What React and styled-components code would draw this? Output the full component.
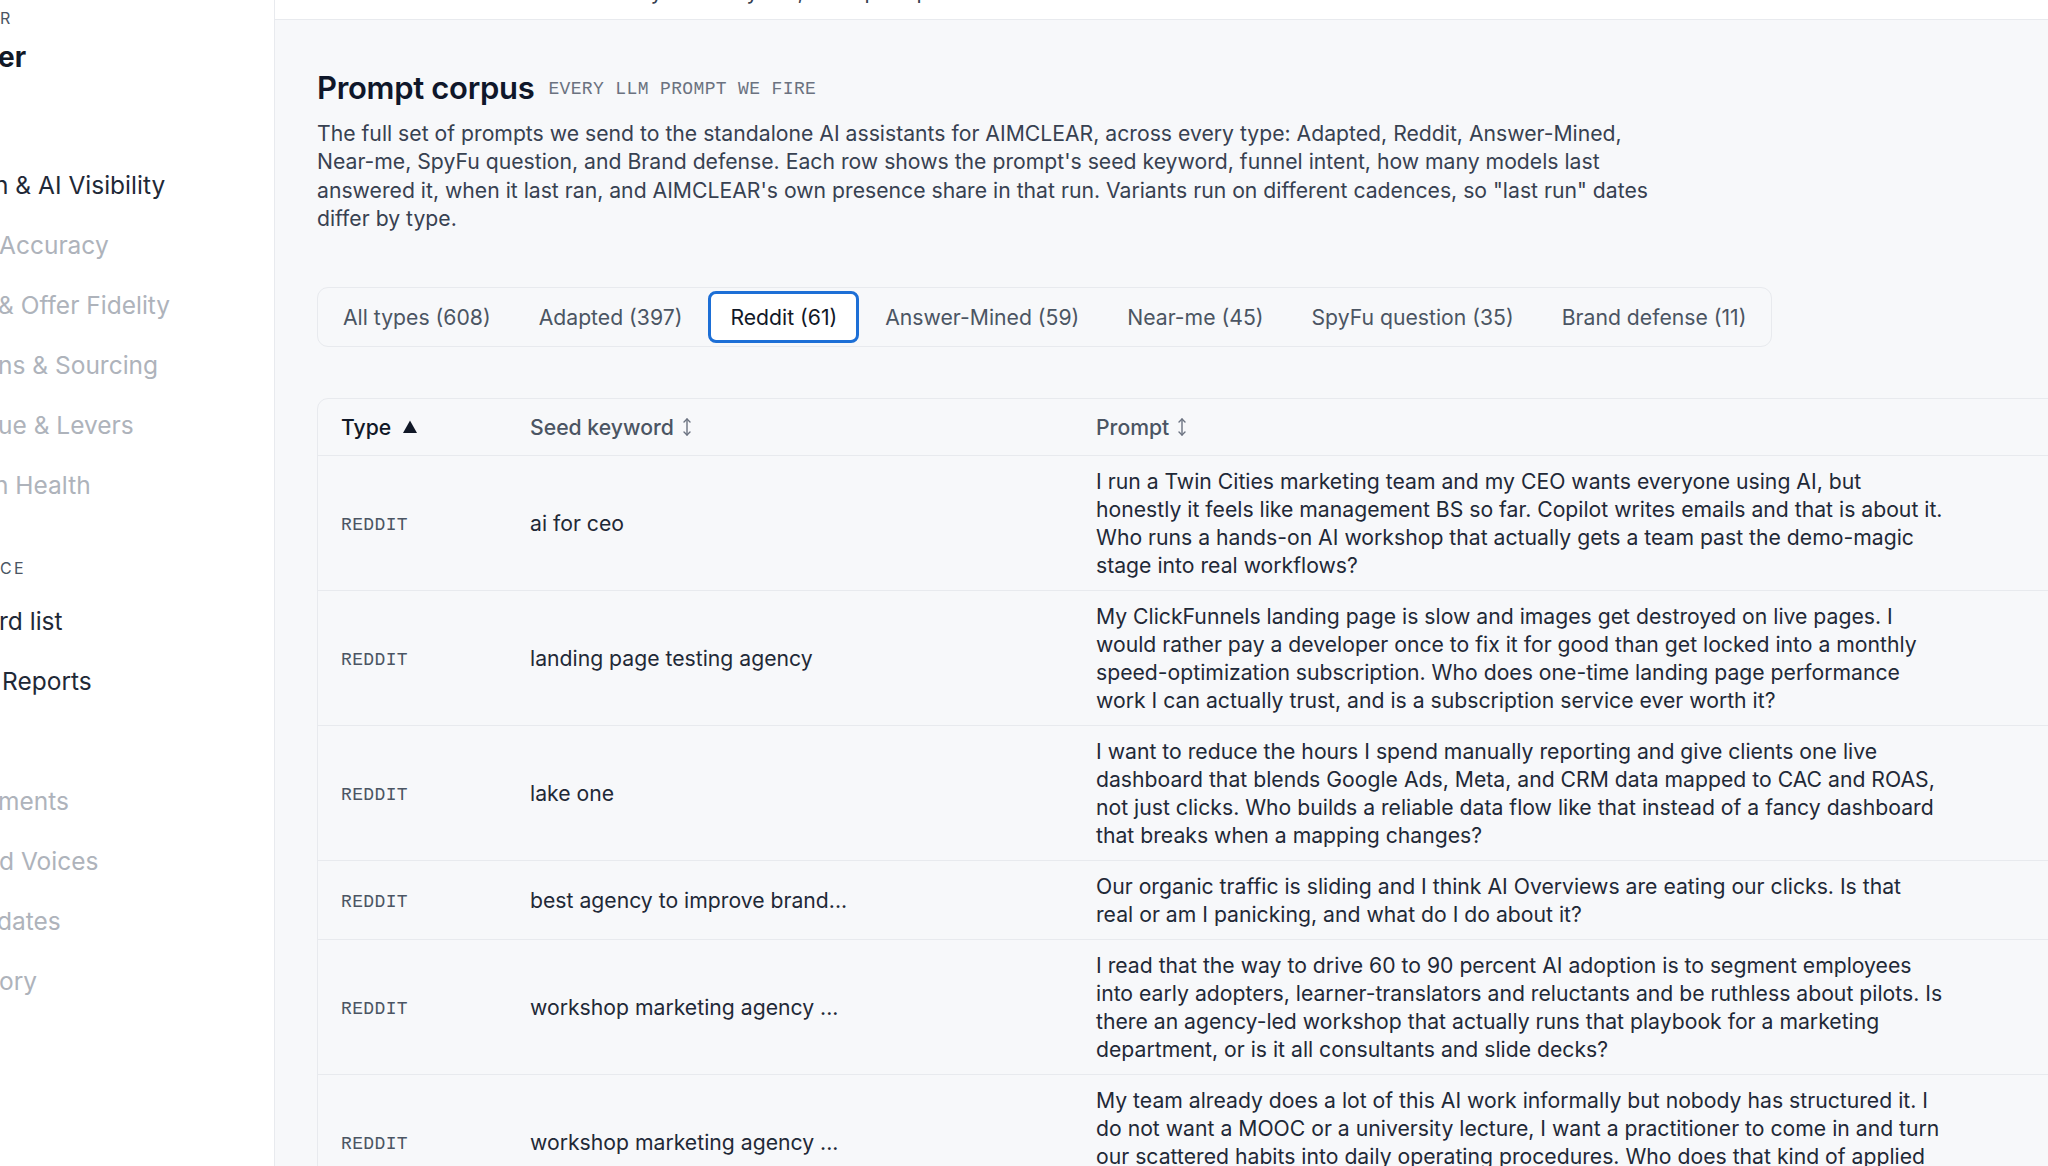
import styled, { createGlobalStyle } from "styled-components";

const GlobalStyle = createGlobalStyle`
  html, body {
    margin: 0;
    padding: 0;
    height: 1166px;
    overflow: hidden;
    background: #f7f8fa;
    font-family: Inter, "Noto Sans", sans-serif;
    color: #1f2937;
  }
  * { box-sizing: border-box; }
`

const Shell = styled.div`
  display: flex;
  width: 2048px;
  height: 1166px;
  overflow: hidden;
`
const Sidebar = styled.aside`
  flex: 0 0 275px;
  background: #ffffff;
  border-right: 1px solid #e8eaee;
  overflow: hidden;
  white-space: nowrap;
`
const Eyebrow = styled.div`
  margin-top: 8px;
  height: 20px;
  line-height: 20px;
  font-size: 16px;
  letter-spacing: 0.12em;
  color: #4b5563;
`
const BrandTitle = styled.div`
  margin-top: 11px;
  height: 36px;
  line-height: 36px;
  font-size: 28px;
  font-weight: 700;
  color: #111827;
  margin-bottom: 80px;
`
const NavItem = styled.div`
  height: 60px;
  display: flex;
  align-items: center;
  font-size: 24.5px;
  color: ${p => (p.$active ? "#1f2937" : "#aeb3bb")};
  margin-left: ${p => p.$shift || 0}px;
`
const SectionLabel = styled.div`
  padding-top: 42px;
  padding-bottom: 12px;
  line-height: 22px;
  font-size: 16px;
  letter-spacing: 0.14em;
  color: #4b5563;
`
const NavSpacer = styled.div`
  height: 60px;
`

const Main = styled.main`
  flex: 1;
  min-width: 0;
  overflow: hidden;
`
const TopBar = styled.header`
  height: 20px;
  background: #ffffff;
  border-bottom: 1px solid #e8eaee;
  overflow: hidden;
  padding-left: 232px;
`
const TopText = styled.div`
  margin-top: -23px;
  line-height: 28px;
  font-size: 21.2px;
  color: #374151;
  white-space: nowrap;
`
const Content = styled.div`
  padding: 48px 0 0 42px;
`
const TitleRow = styled.div`
  display: flex;
  align-items: center;
  gap: 14px;
  height: 40px;
`
const Title = styled.h1`
  margin: 0;
  font-size: 31px;
  line-height: 40px;
  font-weight: 600;
  letter-spacing: -0.01em;
  color: #0f172a;
`
const Kicker = styled.span`
  font-family: "Liberation Mono", "DejaVu Sans Mono", monospace;
  font-size: 18px;
  letter-spacing: 0.02em;
  color: #6b7280;
  padding-top: 1px;
`
const Lead = styled.p`
  margin: 11px 0 0 0;
  max-width: 1337px;
  font-size: 21.2px;
  line-height: 28.4px;
  color: #374151;
`
const TabBar = styled.div`
  display: inline-flex;
  gap: 4px;
  margin-top: 54px;
  padding: 3px;
  border: 1px solid #e8eaee;
  border-radius: 11px;
  background: #f7f8fa;
`
const Tab = styled.button`
  height: 52px;
  padding: 0 19px;
  border-radius: 8px;
  border: 3px solid ${p => (p.$active ? "#1d6fd6" : "transparent")};
  background: ${p => (p.$active ? "#ffffff" : "transparent")};
  font-family: Inter, sans-serif;
  font-size: 21.2px;
  color: ${p => (p.$active ? "#111827" : "#4b5563")};
  cursor: pointer;
`
const TableCard = styled.div`
  margin-top: 51px;
  width: 2400px;
  border: 1px solid #e8eaee;
  border-radius: 11px;
  overflow: hidden;
`
const Table = styled.table`
  border-collapse: collapse;
  table-layout: fixed;
  width: 100%;
`
const Th = styled.th`
  height: 57px;
  padding: 0 23px;
  text-align: left;
  font-weight: 500;
  font-size: 21.2px;
  color: ${p => (p.$sorted ? "#111827" : "#4b5563")};
  border-bottom: 1px solid #e8eaee;
  white-space: nowrap;
`
const HeadInner = styled.span`
  display: inline-flex;
  align-items: center;
  gap: ${p => (p.$sorted ? 11 : 8)}px;
`
const Tr = styled.tr`
  & + & td { border-top: 1px solid #e8eaee; }
`
const Td = styled.td`
  padding: 11px 23px;
  vertical-align: middle;
  font-size: 21.2px;
  line-height: 28px;
  color: #1f2937;
`
const TypeTag = styled.span`
  font-family: "Liberation Mono", "DejaVu Sans Mono", monospace;
  font-size: 18px;
  letter-spacing: 0.02em;
  color: #4b5563;
`
const PromptText = styled.div`
  max-width: 847px;
`

function SortUp() {
  return (
    <svg width="16" height="16" viewBox="0 0 16 16">
      <path d="M8 1.5 L15 14 H1 Z" fill="#111827" />
    </svg>
  );
}

function SortBoth() {
  return (
    <svg width="10" height="20" viewBox="0 0 10 20" fill="none" stroke="#6b7280" strokeWidth="1.4" strokeLinecap="round" strokeLinejoin="round">
      <path d="M5 2 V18" />
      <path d="M2 5 L5 2 L8 5" />
      <path d="M2 15 L5 18 L8 15" />
    </svg>
  );
}

const tabs = [
  { label: "All types (608)" },
  { label: "Adapted (397)" },
  { label: "Reddit (61)", active: true },
  { label: "Answer-Mined (59)" },
  { label: "Near-me (45)" },
  { label: "SpyFu question (35)" },
  { label: "Brand defense (11)" },
];

const rows = [
  {
    seed: "ai for ceo",
    prompt: "I run a Twin Cities marketing team and my CEO wants everyone using AI, but honestly it feels like management BS so far. Copilot writes emails and that is about it. Who runs a hands-on AI workshop that actually gets a team past the demo-magic stage into real workflows?",
  },
  {
    seed: "landing page testing agency",
    prompt: "My ClickFunnels landing page is slow and images get destroyed on live pages. I would rather pay a developer once to fix it for good than get locked into a monthly speed-optimization subscription. Who does one-time landing page performance work I can actually trust, and is a subscription service ever worth it?",
  },
  {
    seed: "lake one",
    prompt: "I want to reduce the hours I spend manually reporting and give clients one live dashboard that blends Google Ads, Meta, and CRM data mapped to CAC and ROAS, not just clicks. Who builds a reliable data flow like that instead of a fancy dashboard that breaks when a mapping changes?",
  },
  {
    seed: "best agency to improve brand...",
    prompt: "Our organic traffic is sliding and I think AI Overviews are eating our clicks. Is that real or am I panicking, and what do I do about it?",
  },
  {
    seed: "workshop marketing agency ...",
    prompt: "I read that the way to drive 60 to 90 percent AI adoption is to segment employees into early adopters, learner-translators and reluctants and be ruthless about pilots. Is there an agency-led workshop that actually runs that playbook for a marketing department, or is it all consultants and slide decks?",
  },
  {
    seed: "workshop marketing agency ...",
    prompt: "My team already does a lot of this AI work informally but nobody has structured it. I do not want a MOOC or a university lecture, I want a practitioner to come in and turn our scattered habits into daily operating procedures. Who does that kind of applied enablement for an in-house marketing team?",
  },
];

export default function App() {
  return (
    <>
      <GlobalStyle />
      <Shell>
        <Sidebar>
          <Eyebrow>R</Eyebrow>
          <BrandTitle style={{ marginLeft: -2 }}>er</BrandTitle>
          <NavItem $active $shift={-6}>n &amp; AI Visibility</NavItem>
          <NavItem $shift={-1}>Accuracy</NavItem>
          <NavItem $shift={-2}>&amp; Offer Fidelity</NavItem>
          <NavItem $shift={-2}>ns &amp; Sourcing</NavItem>
          <NavItem $shift={-2}>ue &amp; Levers</NavItem>
          <NavItem $shift={-6}>n Health</NavItem>
          <SectionLabel>CE</SectionLabel>
          <NavItem $active $shift={-1}>rd list</NavItem>
          <NavItem $active $shift={2}>Reports</NavItem>
          <NavSpacer />
          <NavItem $shift={-2}>ments</NavItem>
          <NavItem $shift={-1}>d Voices</NavItem>
          <NavItem $shift={-3}>dates</NavItem>
          <NavItem $shift={-1}>ory</NavItem>
        </Sidebar>
        <Main>
          <TopBar>
            <TopText>Refreshed daily for every run, each prompt</TopText>
          </TopBar>
          <Content>
            <TitleRow>
              <Title>Prompt corpus</Title>
              <Kicker>EVERY LLM PROMPT WE FIRE</Kicker>
            </TitleRow>
            <Lead>
              The full set of prompts we send to the standalone AI assistants for AIMCLEAR, across every type: Adapted, Reddit, Answer-Mined, Near-me, SpyFu question, and Brand defense. Each row shows the prompt's seed keyword, funnel intent, how many models last answered it, when it last ran, and AIMCLEAR's own presence share in that run. Variants run on different cadences, so "last run" dates differ by type.
            </Lead>
            <TabBar>
              {tabs.map(t => (
                <Tab key={t.label} $active={t.active}>{t.label}</Tab>
              ))}
            </TabBar>
            <TableCard>
              <Table>
                <colgroup>
                  <col style={{ width: 189 }} />
                  <col style={{ width: 566 }} />
                  <col style={{ width: 1000 }} />
                  <col style={{ width: 200 }} />
                  <col style={{ width: 200 }} />
                  <col />
                </colgroup>
                <thead>
                  <tr>
                    <Th $sorted><HeadInner $sorted>Type <SortUp /></HeadInner></Th>
                    <Th><HeadInner>Seed keyword <SortBoth /></HeadInner></Th>
                    <Th><HeadInner>Prompt <SortBoth /></HeadInner></Th>
                    <Th><HeadInner>Intent <SortBoth /></HeadInner></Th>
                    <Th><HeadInner>Models <SortBoth /></HeadInner></Th>
                    <Th><HeadInner>Last run <SortBoth /></HeadInner></Th>
                  </tr>
                </thead>
                <tbody>
                  {rows.map((r, i) => (
                    <Tr key={i}>
                      <Td><TypeTag>REDDIT</TypeTag></Td>
                      <Td>{r.seed}</Td>
                      <Td><PromptText>{r.prompt}</PromptText></Td>
                      <Td>MOFU</Td>
                      <Td>4 / 4</Td>
                      <Td>2 days ago</Td>
                    </Tr>
                  ))}
                </tbody>
              </Table>
            </TableCard>
          </Content>
        </Main>
      </Shell>
    </>
  );
}
